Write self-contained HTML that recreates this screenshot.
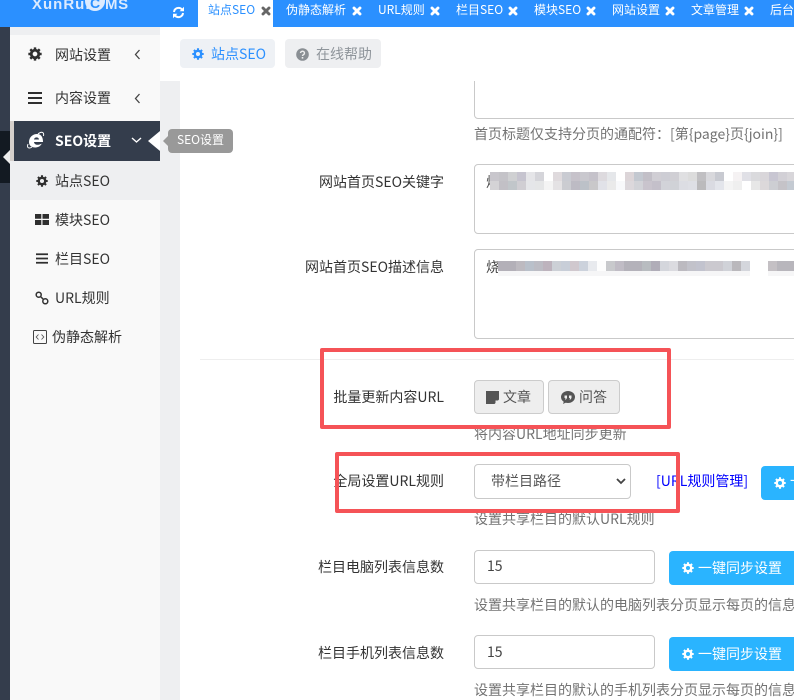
<!DOCTYPE html>
<html lang="zh-CN"><head><meta charset="utf-8"><title>站点SEO</title>
<style>
*{box-sizing:border-box}
html,body{margin:0;padding:0;width:794px;height:700px;overflow:hidden;background:#fff}
body{position:relative;font-family:"Noto Sans CJK SC","Liberation Sans",sans-serif;font-size:14px;color:#333}
.a{position:absolute;white-space:nowrap}
.t{position:absolute;white-space:nowrap;line-height:20px}
.lab{position:absolute;white-space:nowrap;line-height:20px;text-align:right;right:350px;color:#333;font-size:14px}
.hint{position:absolute;left:474px;white-space:nowrap;line-height:20px;color:#737373;font-size:14px}
.tab{position:absolute;top:0;height:27px;line-height:20px;color:#fff;font-size:12px;white-space:nowrap;padding-top:0}
.box{position:absolute;border:1px solid #c9c9c9;border-radius:4px;background:#fff}
.blue{position:absolute;background:#2ab4ff;border-radius:4px;color:#fff;height:34px;line-height:34px;white-space:nowrap;font-size:14px}
.ic{position:absolute;display:block}
.red{position:absolute;border:4px solid #f55357;border-radius:2px;z-index:5}
.gb{position:absolute;top:380px;height:34px;background:#eee;border:1px solid #ccc;border-radius:4px;line-height:32px;color:#555;white-space:nowrap;font-size:14px}
</style></head><body>
<svg width="0" height="0" style="position:absolute"><defs>
<symbol id="gear" viewBox="0 0 16 16"><circle cx="8" cy="8" r="4.3" fill="none" stroke="currentColor" stroke-width="3.2"/><g stroke="currentColor" stroke-width="2.8"><path d="M8 .4v3M8 12.6v3M.4 8h3M12.600 8h3M2.600 2.600l2.200 2.200M11.200 11.200l2.200 2.200M2.600 13.400l2.200-2.200M11.200 4.800l2.200-2.200"/></g></symbol>
<symbol id="x" viewBox="0 0 10 10"><path d="M2 2l6 6M8 2l-6 6" stroke="currentColor" stroke-width="2.9" stroke-linecap="round"/></symbol>
<symbol id="bars" viewBox="0 0 14 12"><path d="M0 0h14v2H0zM0 5h14v2H0zM0 10h14v2H0z" fill="currentColor"/></symbol>
</defs></svg>

<!-- top bar -->
<div class="a" style="left:0;top:0;width:794px;height:27px;background:#2b90ff"></div>
<div class="a" style="left:32px;top:-5px;font:bold 15px/20px 'Liberation Sans',sans-serif;letter-spacing:1px;color:#dcebff">XunRui</div>
<div class="a" style="left:85px;top:-9px;width:20px;height:20px;border-radius:50%;background:#dcebff"></div>
<div class="a" style="left:90px;top:-6px;font:bold 14px/18px 'Liberation Sans',sans-serif;color:#2b90ff">C</div>
<div class="a" style="left:105px;top:-5px;font:bold 15px/20px 'Liberation Sans',sans-serif;letter-spacing:.6px;color:#dcebff">MS</div>
<svg class="ic" style="left:172px;top:6px" width="13" height="13" viewBox="0 0 13 13"><path d="M2 6a4.600 4.600 0 0 1 8-2.600M11 7a4.600 4.600 0 0 1-8 2.600" fill="none" stroke="#fff" stroke-width="2"/><path d="M12 .8v4.400H7.600zM1 12.200V7.800h4.400z" fill="#fff"/></svg>
<div class="a" style="left:198px;top:0;width:75px;height:27px;background:#fff"></div>
<div class="tab" style="left:208px;color:#2b90ff">站点SEO</div>
<svg class="ic" style="left:261px;top:6px;color:#666" width="10" height="10"><use href="#x"/></svg>
<div class="tab" style="left:286px">伪静态解析</div><svg class="ic" style="left:352px;top:6px;color:#fff" width="10" height="10"><use href="#x"/></svg>
<div class="tab" style="left:378px">URL规则</div><svg class="ic" style="left:430px;top:6px;color:#fff" width="10" height="10"><use href="#x"/></svg>
<div class="tab" style="left:456px">栏目SEO</div><svg class="ic" style="left:508px;top:6px;color:#fff" width="10" height="10"><use href="#x"/></svg>
<div class="tab" style="left:534px">模块SEO</div><svg class="ic" style="left:586px;top:6px;color:#fff" width="10" height="10"><use href="#x"/></svg>
<div class="tab" style="left:612px">网站设置</div><svg class="ic" style="left:665px;top:6px;color:#fff" width="10" height="10"><use href="#x"/></svg>
<div class="tab" style="left:691px">文章管理</div><svg class="ic" style="left:744px;top:6px;color:#fff" width="10" height="10"><use href="#x"/></svg>
<div class="tab" style="left:770px">后台</div>

<!-- dark rail -->
<div class="a" style="left:0;top:27px;width:10px;height:673px;background:#343d4c"></div>
<div class="a" style="left:0;top:131px;width:10px;height:52px;background:#131a22"></div>
<div class="a" style="left:3px;top:150px;width:0;height:0;border-style:solid;border-width:7px 7px 7px 0;border-color:transparent #eee transparent transparent"></div>

<!-- sidebar -->
<div class="a" style="left:10px;top:27px;width:150px;height:673px;background:#f9f9f9"></div>
<div class="a" style="left:10px;top:27px;width:150px;height:8px;background:#eeeff1"></div>
<div class="a" style="left:160px;top:81px;width:20px;height:619px;background:#eeeff1"></div>
<div class="a" style="left:10px;top:121px;width:4px;height:40px;background:#d5d0cc"></div>
<div class="a" style="left:14px;top:121px;width:146px;height:40px;background:#343d4c"></div>
<div class="a" style="left:10px;top:161px;width:150px;height:39px;background:#eeeff1"></div>
<div class="a" style="left:148px;top:131px;width:0;height:0;border-style:solid;border-width:10px 12px 10px 0;border-color:transparent #fff transparent transparent"></div>

<svg class="ic" style="left:28px;top:47px;color:#2f2f2f" width="14" height="14"><use href="#gear"/></svg>
<div class="t" style="left:55px;top:45px;color:#333">网站设置</div>
<svg class="ic" style="left:134px;top:49px" width="7" height="11" viewBox="0 0 7 11"><path d="M5.500 1L1.500 5.500l4 4.500" fill="none" stroke="#444" stroke-width="1.300"/></svg>
<svg class="ic" style="left:28px;top:92px;color:#2f2f2f" width="14" height="12"><use href="#bars"/></svg>
<div class="t" style="left:55px;top:88px;color:#333">内容设置</div>
<svg class="ic" style="left:134px;top:93px" width="7" height="11" viewBox="0 0 7 11"><path d="M5.500 1L1.500 5.500l4 4.500" fill="none" stroke="#444" stroke-width="1.300"/></svg>
<svg class="ic" style="left:26px;top:131px" width="19" height="19" viewBox="0 0 19 19"><path d="M3 11C3 6 7 3 11 3s6 3 6 8H8c.3 3 4 3.600 7.700 1.600-1.200 2.800-4 3.900-6.700 3.900C5.500 16.500 3 14.500 3 11zM8 8.500h5c-.3-2.800-4.500-2.800-5 0z" fill="#fff" fill-rule="evenodd"/><path d="M2 13C.5 17 3 18 6 16M12 3c3-2.500 6.500-2.500 5.500 2" fill="none" stroke="#fff" stroke-width="1"/></svg>
<div class="t" style="left:55px;top:131px;color:#fff;font-weight:bold">SEO设置</div>
<svg class="ic" style="left:131px;top:137px" width="11" height="7" viewBox="0 0 11 7"><path d="M1 1l4.500 4L10 1" fill="none" stroke="#fff" stroke-width="1.400"/></svg>

<svg class="ic" style="left:36px;top:175px;color:#2f2f2f" width="12" height="12"><use href="#gear"/></svg>
<div class="t" style="left:55px;top:171px">站点SEO</div>
<svg class="ic" style="left:35px;top:214px" width="14" height="11" viewBox="0 0 14 11"><path d="M0 0h6.300v4.800H0zM7.500 0H14v4.800H7.500zM0 6h6.300v5H0zM7.500 6H14v5H7.500z" fill="#2f2f2f"/></svg>
<div class="t" style="left:55px;top:210px">模块SEO</div>
<svg class="ic" style="left:36px;top:253px;color:#2f2f2f" width="12" height="11"><use href="#bars"/></svg>
<div class="t" style="left:55px;top:249px">栏目SEO</div>
<svg class="ic" style="left:35px;top:291px" width="14" height="14" viewBox="0 0 14 14"><g fill="none" stroke="#333" stroke-width="1.500"><circle cx="3.700" cy="3.700" r="2.500"/><circle cx="10.300" cy="10.300" r="2.500"/><path d="M5.500 5.500l3 3"/></g></svg>
<div class="t" style="left:55px;top:288px">URL规则</div>
<svg class="ic" style="left:33px;top:330px" width="14" height="14" viewBox="0 0 14 14"><rect x=".5" y=".5" width="13" height="13" rx="1" fill="none" stroke="#444"/><path d="M5.500 4.500L3.200 7l2.300 2.500M8.500 4.500L10.800 7 8.500 9.500" fill="none" stroke="#555" stroke-width=".9"/></svg>
<div class="t" style="left:52px;top:327px">伪静态解析</div>

<!-- tooltip -->
<div class="a" style="left:163px;top:136px;width:0;height:0;border-style:solid;border-width:5px 5px 5px 0;border-color:transparent #999 transparent transparent"></div>
<div class="a" style="left:168px;top:129px;width:65px;height:24px;background:#999;border-radius:4px;color:#fff;font-size:12px;line-height:22px;text-align:center">SEO设置</div>

<!-- header buttons -->
<div class="a" style="left:180px;top:39px;width:95px;height:29px;background:#eef1f5;border-radius:4px"></div>
<svg class="ic" style="left:192px;top:48px;color:#2b90ff" width="12" height="12"><use href="#gear"/></svg>
<div class="t" style="left:211px;top:44px;color:#2b90ff">站点SEO</div>
<div class="a" style="left:285px;top:39px;width:96px;height:29px;background:#eeeff1;border-radius:4px"></div>
<svg class="ic" style="left:296px;top:48px" width="13" height="13" viewBox="0 0 13 13"><circle cx="6.500" cy="6.500" r="6.300" fill="#8a8f94"/><path d="M4.500 5a2 1.800 0 1 1 3 1.600c-.7.400-1 .7-1 1.400" fill="none" stroke="#eee" stroke-width="1.400"/><rect x="5.700" y="9" width="1.600" height="1.600" fill="#eee"/></svg>
<div class="t" style="left:316px;top:44px;color:#8f959b">在线帮助</div>

<!-- form -->
<div class="box" style="left:474px;top:60px;width:340px;height:59px"></div>
<div class="a" style="left:440px;top:27px;width:354px;height:54px;background:#fff"></div>
<div class="a" style="left:474px;top:81px;width:1px;height:30px;background:#c9c9c9"></div>
<div class="hint" style="top:124px">首页标题仅支持分页的通配符：[第{page}页{join}]</div>

<div class="lab" style="top:172px">网站首页SEO关键字</div>
<div class="box" style="left:474px;top:164px;width:340px;height:70px"></div>
<div class="a" style="left:486px;top:172px;font-size:14px;line-height:20px;color:#444">烧</div>
<svg class="ic" style="left:490px;top:172px" width="304" height="18" shape-rendering="crispEdges">
<g><rect x="0" width="9" height="9" fill="#c8c6cc"/><rect x="9" width="9" height="9" fill="#c4c3c8"/><rect x="18" width="9" height="9" fill="#cfd0d2"/><rect x="27" width="9" height="9" fill="#c6c4cf"/><rect x="36" width="9" height="9" fill="#e5e5e8"/><rect x="45" width="9" height="9" fill="#d5d5da"/><rect x="54" width="9" height="9" fill="#fff"/><rect x="63" width="9" height="9" fill="#dfdadd"/><rect x="72" width="9" height="9" fill="#c9cbd2"/><rect x="81" width="9" height="9" fill="#c6c2ca"/><rect x="90" width="9" height="9" fill="#c9c8ce"/><rect x="99" width="9" height="9" fill="#c5c2ca"/><rect x="108" width="9" height="9" fill="#dddade"/><rect x="117" width="9" height="9" fill="#e5e7ea"/><rect x="126" width="9" height="9" fill="#fff"/><rect x="135" width="9" height="9" fill="#dcd5d8"/><rect x="144" width="9" height="9" fill="#c3c8d0"/><rect x="153" width="9" height="9" fill="#c2bfc7"/><rect x="162" width="9" height="9" fill="#d0ced4"/><rect x="171" width="9" height="9" fill="#cdcdd4"/><rect x="180" width="9" height="9" fill="#d0cfd4"/><rect x="189" width="9" height="9" fill="#e0e0e2"/><rect x="198" width="9" height="9" fill="#dcdcdc"/><rect x="207" width="9" height="9" fill="#c0bfc2"/><rect x="216" width="9" height="9" fill="#d8d8dc"/><rect x="225" width="9" height="9" fill="#c8cad1"/><rect x="243" width="9" height="9" fill="#f5f2f3"/><rect x="252" width="9" height="9" fill="#e0e0e6"/><rect x="261" width="9" height="9" fill="#dadadd"/><rect x="270" width="9" height="9" fill="#d9d6da"/><rect x="279" width="9" height="9" fill="#c8c6d2"/><rect x="288" width="9" height="9" fill="#d2d0d6"/><rect x="297" width="9" height="9" fill="#d8d6da"/></g>
<g><rect x="0" y="9" width="9" height="9" fill="#d4d3d6"/><rect x="9" y="9" width="9" height="9" fill="#c2c0c6"/><rect x="18" y="9" width="9" height="9" fill="#c1c6ca"/><rect x="27" y="9" width="9" height="9" fill="#d0ced3"/><rect x="36" y="9" width="9" height="9" fill="#e5e6e9"/><rect x="45" y="9" width="9" height="9" fill="#e5e6e7"/><rect x="54" y="9" width="9" height="9" fill="#f4f4f4"/><rect x="63" y="9" width="9" height="9" fill="#e4e2e4"/><rect x="72" y="9" width="9" height="9" fill="#cbccd1"/><rect x="81" y="9" width="9" height="9" fill="#bdbbc4"/><rect x="90" y="9" width="9" height="9" fill="#bcc1c8"/><rect x="99" y="9" width="9" height="9" fill="#c9c8ca"/><rect x="108" y="9" width="9" height="9" fill="#e1e2e8"/><rect x="117" y="9" width="9" height="9" fill="#eaeaea"/><rect x="126" y="9" width="9" height="9" fill="#f8f9fb"/><rect x="135" y="9" width="9" height="9" fill="#dcd8dc"/><rect x="144" y="9" width="9" height="9" fill="#d2d3d8"/><rect x="153" y="9" width="9" height="9" fill="#c9c4cd"/><rect x="162" y="9" width="9" height="9" fill="#c4c0ca"/><rect x="171" y="9" width="9" height="9" fill="#d2d3d9"/><rect x="180" y="9" width="9" height="9" fill="#d0d2d7"/><rect x="189" y="9" width="9" height="9" fill="#dcdde3"/><rect x="198" y="9" width="9" height="9" fill="#dedfe5"/><rect x="207" y="9" width="9" height="9" fill="#bbbabc"/><rect x="216" y="9" width="9" height="9" fill="#dadbe2"/><rect x="225" y="9" width="9" height="9" fill="#e3e5eb"/><rect x="234" y="9" width="9" height="9" fill="#f4f4f4"/><rect x="243" y="9" width="9" height="9" fill="#efefef"/><rect x="261" y="9" width="9" height="9" fill="#e7e7e7"/><rect x="270" y="9" width="9" height="9" fill="#dcd8da"/><rect x="279" y="9" width="9" height="9" fill="#cdced3"/><rect x="288" y="9" width="9" height="9" fill="#c5c3c8"/><rect x="297" y="9" width="9" height="9" fill="#c4cad2"/></g>
</svg>

<div class="lab" style="top:257px">网站首页SEO描述信息</div>
<div class="box" style="left:474px;top:249px;width:340px;height:90px"></div>
<div class="a" style="left:486px;top:257px;font-size:14px;line-height:20px;color:#444">烧</div>
<svg class="ic" style="left:498px;top:261px" width="296" height="16" shape-rendering="crispEdges">
<rect y="0" x="0" width="296" height="16" fill="#fff"/>
<rect y="10" x="0" width="296" height="5" fill="#f6f6f7"/>
<rect x="0" width="18" height="10" fill="#b3b0b8"/><rect x="18" width="9" height="10" fill="#bdbac0"/><rect x="27" width="9" height="10" fill="#b9c0ca"/><rect x="36" width="9" height="10" fill="#bcbcc4"/><rect x="45" width="9" height="10" fill="#bdb3bd"/><rect x="54" width="9" height="10" fill="#ccd0d6"/><rect x="63" width="9" height="10" fill="#c8ced8"/><rect x="72" width="9" height="10" fill="#d0c8ce"/><rect x="81" width="9" height="10" fill="#ccd2dc"/><rect x="90" width="9" height="10" fill="#e8eaee"/><rect x="99" width="9" height="10" fill="#fdfdfd"/><rect x="108" width="9" height="10" fill="#c8c9cc"/><rect x="117" width="9" height="10" fill="#c0bcc5"/><rect x="126" width="18" height="10" fill="#b4b2ba"/><rect x="144" width="9" height="10" fill="#b8bcc0"/><rect x="153" width="9" height="10" fill="#b0adb8"/><rect x="162" width="9" height="10" fill="#d4d6dc"/><rect x="171" width="9" height="10" fill="#dbdbe0"/><rect x="180" width="9" height="10" fill="#bcbac0"/><rect x="189" width="9" height="10" fill="#c2c2ca"/><rect x="198" width="9" height="10" fill="#c2c3ce"/><rect x="207" width="18" height="10" fill="#cbc9cf"/><rect x="225" width="9" height="10" fill="#d0d2d8"/><rect x="234" width="9" height="10" fill="#bab8bc"/><rect x="243" width="9" height="10" fill="#d4d6dc"/><rect x="252" width="18" height="16" fill="#fff"/><rect x="270" width="9" height="10" fill="#c4c0c4"/><rect x="279" width="17" height="10" fill="#b8b6bc"/>
</svg>

<div class="a" style="left:200px;top:359px;width:594px;height:1px;background:#eee"></div>

<div class="lab" style="top:387px">批量更新内容URL</div>
<div class="gb" style="left:474px;width:70px"></div>
<svg class="ic" style="left:486px;top:391px;z-index:1" width="13" height="13" viewBox="0 0 13 13"><path d="M0 0h13v8.500L8.500 13H0z" fill="#555"/><path d="M9.500 9.500H13L9.500 13z" fill="#eee"/></svg>
<div class="t" style="left:503px;top:387px;color:#555">文章</div>
<div class="gb" style="left:548px;width:72px"></div>
<svg class="ic" style="left:561px;top:391px" width="14" height="13" viewBox="0 0 14 13"><ellipse cx="7" cy="6" rx="7" ry="6" fill="#555"/><path d="M3 10l-1 3 4-2z" fill="#555"/><path d="M3.500 4.500h2.500v2.500l-1 1.500H4l.5-1.500h-1zM8 4.500h2.500v2.500l-1 1.500h-1l.5-1.500H8z" fill="#eee"/></svg>
<div class="t" style="left:579px;top:387px;color:#555">问答</div>
<div class="hint" style="top:424px">将内容URL地址同步更新</div>

<div class="lab" style="top:471px">全局设置URL规则</div>
<div class="box" style="left:474px;top:464px;width:157px;height:35px"></div>
<div class="t" style="left:491px;top:471px;color:#555">带栏目路径</div>
<svg class="ic" style="left:616px;top:478px" width="10" height="7" viewBox="0 0 10 7"><path d="M1 1l4 4 4-4" fill="none" stroke="#444" stroke-width="1.800"/></svg>
<div class="t" style="left:656px;top:471px;color:#00f">[URL规则管理]</div>
<div class="blue" style="left:761px;top:466px;width:60px"></div>
<svg class="ic" style="left:774px;top:477px;color:#fff" width="12" height="12"><use href="#gear"/></svg>
<div class="a" style="left:790px;top:471px;line-height:20px;color:#fff">一</div>
<div class="hint" style="top:509px">设置共享栏目的默认URL规则</div>

<div class="lab" style="top:557px">栏目电脑列表信息数</div>
<div class="box" style="left:474px;top:550px;width:181px;height:34px"></div>
<div class="t" style="left:487px;top:556px;color:#444">15</div>
<div class="blue" style="left:669px;top:551px;width:140px"></div>
<svg class="ic" style="left:682px;top:562px;color:#fff" width="12" height="12"><use href="#gear"/></svg>
<div class="t" style="left:698px;top:558px;color:#fff">一键同步设置</div>
<div class="hint" style="top:595px">设置共享栏目的默认的电脑列表分页显示每页的信息数量</div>

<div class="lab" style="top:643px">栏目手机列表信息数</div>
<div class="box" style="left:474px;top:635px;width:181px;height:34px"></div>
<div class="t" style="left:487px;top:642px;color:#444">15</div>
<div class="blue" style="left:669px;top:637px;width:140px"></div>
<svg class="ic" style="left:682px;top:648px;color:#fff" width="12" height="12"><use href="#gear"/></svg>
<div class="t" style="left:698px;top:644px;color:#fff">一键同步设置</div>
<div class="hint" style="top:680px">设置共享栏目的默认的手机列表分页显示每页的信息数量</div>

<!-- annotations -->
<div class="red" style="left:320px;top:348px;width:351px;height:81px"></div>
<div class="red" style="left:335px;top:452px;width:345px;height:61px"></div>
</body></html>
